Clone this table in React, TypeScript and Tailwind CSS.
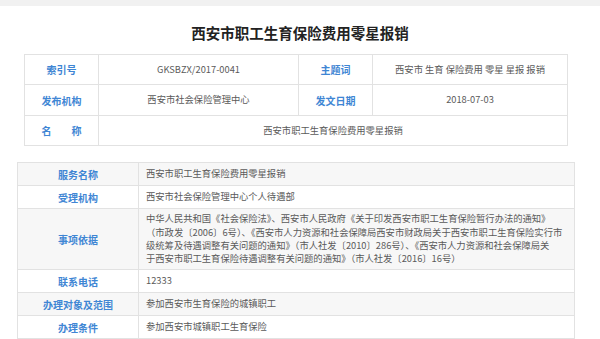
const FONT = { fontFamily: '"Noto Sans CJK SC", "Noto Sans", sans-serif' };

const BASIS_LINES = [
  '中华人民共和国《社会保险法》、西安市人民政府《关于印发西安市职工生育保险暂行办法的通知》',
  '（市政发〔2006〕6号）、《西安市人力资源和社会保障局西安市财政局关于西安市职工生育保险实行市',
  '级统筹及待遇调整有关问题的通知》（市人社发〔2010〕286号）、《西安市人力资源和社会保障局关',
  '于西安市职工生育保险待遇调整有关问题的通知》（市人社发〔2016〕16号）',
];

const SERVICE_ROWS: { label: string; value: React.ReactNode; h: string }[] = [
  { label: '服务名称', value: '西安市职工生育保险费用零星报销', h: 'h-[23px]' },
  { label: '受理机构', value: '西安市社会保险管理中心个人待遇部', h: 'h-[23px]' },
  {
    label: '事项依据',
    value: BASIS_LINES.map((l) => (
      <span key={l} className="block whitespace-nowrap">
        {l}
      </span>
    )),
    h: 'h-[61px]',
  },
  { label: '联系电话', value: '12333', h: 'h-[23px]' },
  { label: '办理对象及范围', value: '参加西安市生育保险的城镇职工', h: 'h-[23px]' },
  { label: '办理条件', value: '参加西安市城镇职工生育保险', h: 'h-[23px]' },
];

const label = 'border border-[#e2e2e2] text-center font-semibold text-[#3f86d4] text-[10px]';
const cell = 'border border-[#e2e2e2] text-[9.3px] text-[#5a5a5a]';

export default function App() {
  return (
    <div className="w-[600px] h-[339px] overflow-hidden bg-white" style={FONT}>
      <div className="h-[6px] bg-[#f1f1f1]" />

      {/* Title */}
      <h1 className="mt-[18px] text-center text-[14.5px] font-bold text-[#222] leading-[18px]">
        西安市职工生育保险费用零星报销
      </h1>

      {/* Meta table */}
      <table className="ml-[24px] mt-[12px] w-[544px] border-collapse table-fixed">
        <colgroup>
          <col className="w-[74px]" />
          <col className="w-[200px]" />
          <col className="w-[74px]" />
          <col />
        </colgroup>
        <tbody>
          <tr className="h-[30px]">
            <td className={label}>索引号</td>
            <td className={`${cell} text-center`}>GKSBZX/2017-0041</td>
            <td className={label}>主题词</td>
            <td className={`${cell} text-center`}>西安市 生育 保险费用 零星 星报 报销</td>
          </tr>
          <tr className="h-[31px]">
            <td className={label}>发布机构</td>
            <td className={`${cell} text-center`}>西安市社会保险管理中心</td>
            <td className={label}>发文日期</td>
            <td className={`${cell} text-center`}>2018-07-03</td>
          </tr>
          <tr className="h-[30px]">
            <td className={`${label} whitespace-pre`}>名　　称</td>
            <td className={`${cell} text-center`} colSpan={3}>
              西安市职工生育保险费用零星报销
            </td>
          </tr>
        </tbody>
      </table>

      {/* Service table */}
      <table className="ml-[17px] mt-[16px] w-[558px] border-collapse table-fixed">
        <colgroup>
          <col className="w-[121px]" />
          <col />
        </colgroup>
        <tbody>
          {SERVICE_ROWS.map((r, i) => (
            <tr key={r.label} className={`${r.h} ${i % 2 === 0 ? 'bg-[#f7f7f7]' : 'bg-white'}`}>
              <td className={label}>{r.label}</td>
              <td className={`${cell} pl-[7px] leading-[13.4px]`}>{r.value}</td>
            </tr>
          ))}
        </tbody>
      </table>
    </div>
  );
}
